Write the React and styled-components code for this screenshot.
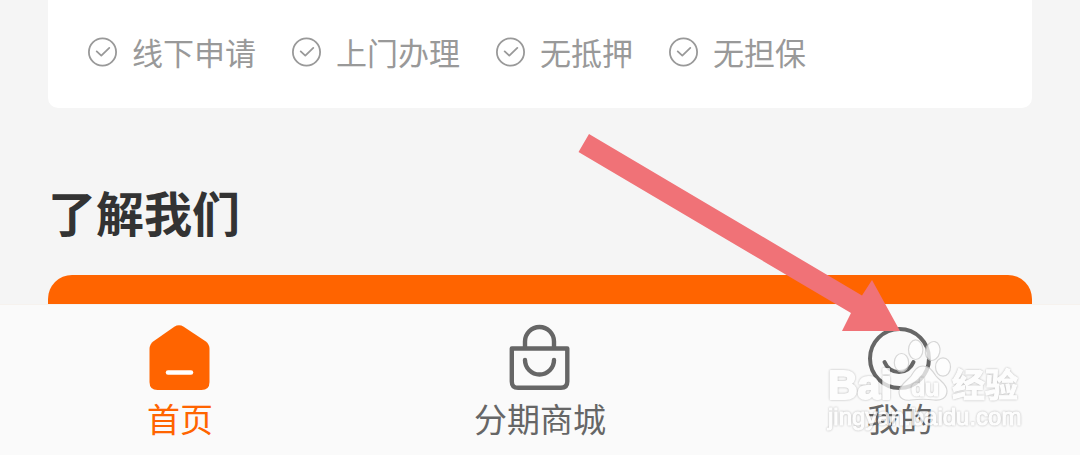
import React from "react";
import styled, { createGlobalStyle } from "styled-components";

const GlobalStyle = createGlobalStyle`
  * { box-sizing: border-box; }
  body {
    margin: 0;
    background: #f5f5f5;
    font-family: "Noto Sans CJK SC", "Noto Sans", sans-serif;
  }
`;

const Page = styled.div`
  display: flex;
  flex-direction: column;
  height: 100vh;
  overflow: hidden;
`;

const Content = styled.main`
  flex: 1;
  min-height: 0;
  overflow: hidden;
  padding: 0 48px;
`;

const Card = styled.section`
  padding: 32px 40px 36px;
  background: #ffffff;
  border-radius: 0 0 10px 10px;
`;

const Features = styled.ul`
  display: flex;
  gap: 36px;
  margin: 0;
  padding: 0;
  list-style: none;
`;

const Feature = styled.li`
  display: flex;
  align-items: center;
  gap: 14px;
  color: #999999;
  font-size: 31px;
  line-height: 40px;
  white-space: nowrap;
`;

const Title = styled.h2`
  margin: 68px 0 28px;
  color: #333333;
  font-size: 48px;
  font-weight: 700;
  line-height: 71px;
`;

const Banner = styled.div`
  height: 320px;
  background: #ff6400;
  border-radius: 24px;
`;

const TabBar = styled.nav`
  position: relative;
  display: flex;
  flex: none;
  background: #fafafa;
  border-top: 1px solid #f6f2ee;
`;

const TabSlot = styled.div`
  position: relative;
  flex: 1;
`;

const Tab = styled.button`
  display: flex;
  flex-direction: column;
  align-items: center;
  gap: 2px;
  width: 100%;
  padding: 19px 0 13px;
  border: 0;
  background: none;
  color: ${({ $active }) => ($active ? "#ff6400" : "#666666")};
  font-family: inherit;
  font-size: 33px;
  line-height: 48px;
  white-space: nowrap;
  cursor: pointer;
`;

const Arrow = styled.svg`
  position: absolute;
  right: 50%;
  bottom: 124px;
  pointer-events: none;
`;

const Watermark = styled.svg`
  position: absolute;
  left: 50%;
  bottom: 16px;
  margin-left: -80px;
  pointer-events: none;
`;

const MarkText = styled.text`
  fill: #ffffff;
  stroke: #ffffff;
  stroke-width: ${({ $weight }) => $weight}px;
  stroke-linejoin: round;
  filter: drop-shadow(0 0 1px rgba(0, 0, 0, 0.36));
`;

const CheckIcon = () => (
  <svg width="30" height="30" viewBox="0 0 30 30" fill="none" stroke="#999999" strokeWidth="1.8" aria-hidden="true">
    <circle cx="14.5" cy="15" r="13.6" />
    <path d="M8.7 14.4l4.6 4.2 8-7.7" strokeLinecap="round" strokeLinejoin="round" />
  </svg>
);

const HomeIcon = () => (
  <svg width="68" height="68" viewBox="0 0 68 68" aria-hidden="true">
    <path
      fill="#ff6400"
      d="M28.3 2.7Q33 -.2 37.7 2.7L59.5 17.2Q63.500 20.200 63.500 25V58Q63.500 66 55.500 66H11.500Q3.500 66 3.500 58V25Q3.500 20.200 7.500 17.200Z"
    />
    <path d="M22 48.500H45" stroke="#ffffff" strokeWidth="4.500" strokeLinecap="round" />
  </svg>
);

const BagIcon = () => (
  <svg width="68" height="68" viewBox="0 0 68 68" fill="none" stroke="#666666" strokeWidth="4.400" aria-hidden="true">
    <path d="M5.800 24.500H61.300V57.500Q61.300 63.800 55 63.800H12.100Q5.800 63.800 5.800 57.500Z" strokeLinejoin="round" />
    <path d="M19 24V17.500a14.500 14.500 0 0 1 29 0V24" />
    <path d="M19 36a14.500 14.500 0 0 0 29 0" strokeLinecap="round" />
  </svg>
);

const SmileIcon = () => (
  <svg width="68" height="68" viewBox="0 0 68 68" fill="none" stroke="#666666" strokeWidth="4" aria-hidden="true">
    <circle cx="33.500" cy="34.500" r="29.500" />
    <path d="M18.500 38a15.500 15.500 0 0 0 29 0" strokeLinecap="round" />
  </svg>
);

const features = ["线下申请", "上门办理", "无抵押", "无担保"];

const tabs = [
  { label: "首页", Icon: HomeIcon, active: true },
  { label: "分期商城", Icon: BagIcon },
  { label: "我的", Icon: SmileIcon, marked: true },
];

const PointerArrow = () => (
  <Arrow width="322" height="198" viewBox="0 0 322 198" aria-hidden="true">
    <path fill="#f07277" d="M11 1L284 162.500 294 147 322 198H264L273 180 .5 19Z" />
  </Arrow>
);

const BaiduMark = () => (
  <Watermark width="210" height="100" viewBox="0 0 210 100" role="img" aria-label="Baidu 经验">
    <g opacity="0.75">
      <g fill="#ffffff" stroke="#cccccc" strokeWidth="1.200" strokeLinejoin="round">
        <ellipse cx="81.500" cy="23.700" rx="7.200" ry="9.200" />
        <ellipse cx="95.700" cy="10.700" rx="7.200" ry="9.800" />
        <ellipse cx="112.700" cy="12" rx="7.200" ry="9.600" transform="rotate(14 112.700 12)" />
        <ellipse cx="123" cy="28" rx="7.500" ry="9.200" />
        <path d="M103 27C97 27 94 32 91 37C87 42 79 46 79 53C79 60 85 62 91 61C99 60 107 60 114 61C121 62 127 59 127 52C127 45 120 42 116 37C112 31 109 27 103 27Z" />
      </g>
      <MarkText x="8" y="60" $weight={2} fontSize="41" fontWeight="700" fontFamily="'Liberation Sans', Arial, sans-serif">
        Bai
      </MarkText>
      <MarkText x="91" y="57" $weight={1} fontSize="23" fontWeight="700" fontFamily="'Liberation Sans', Arial, sans-serif">
        du
      </MarkText>
      <MarkText x="132" y="58" $weight={1} fontSize="33" fontWeight="700" fontFamily="'Noto Sans CJK SC', sans-serif">
        经验
      </MarkText>
      <MarkText x="8" y="86" $weight={1} fontSize="24" fontFamily="'Liberation Sans', Arial, sans-serif">
        jingyan.baidu.com
      </MarkText>
    </g>
  </Watermark>
);

export default function App() {
  return (
    <>
      <GlobalStyle />
      <Page>
        <Content>
          <Card>
            <Features>
              {features.map((label) => (
                <Feature key={label}>
                  <CheckIcon />
                  {label}
                </Feature>
              ))}
            </Features>
          </Card>
          <Title>了解我们</Title>
          <Banner />
        </Content>
        <TabBar>
          {tabs.map(({ label, Icon, active, marked }) => (
            <TabSlot key={label}>
              <Tab type="button" $active={active} aria-current={active ? "page" : undefined}>
                <Icon />
                {label}
              </Tab>
              {marked && <PointerArrow />}
              {marked && <BaiduMark />}
            </TabSlot>
          ))}
        </TabBar>
      </Page>
    </>
  );
}
